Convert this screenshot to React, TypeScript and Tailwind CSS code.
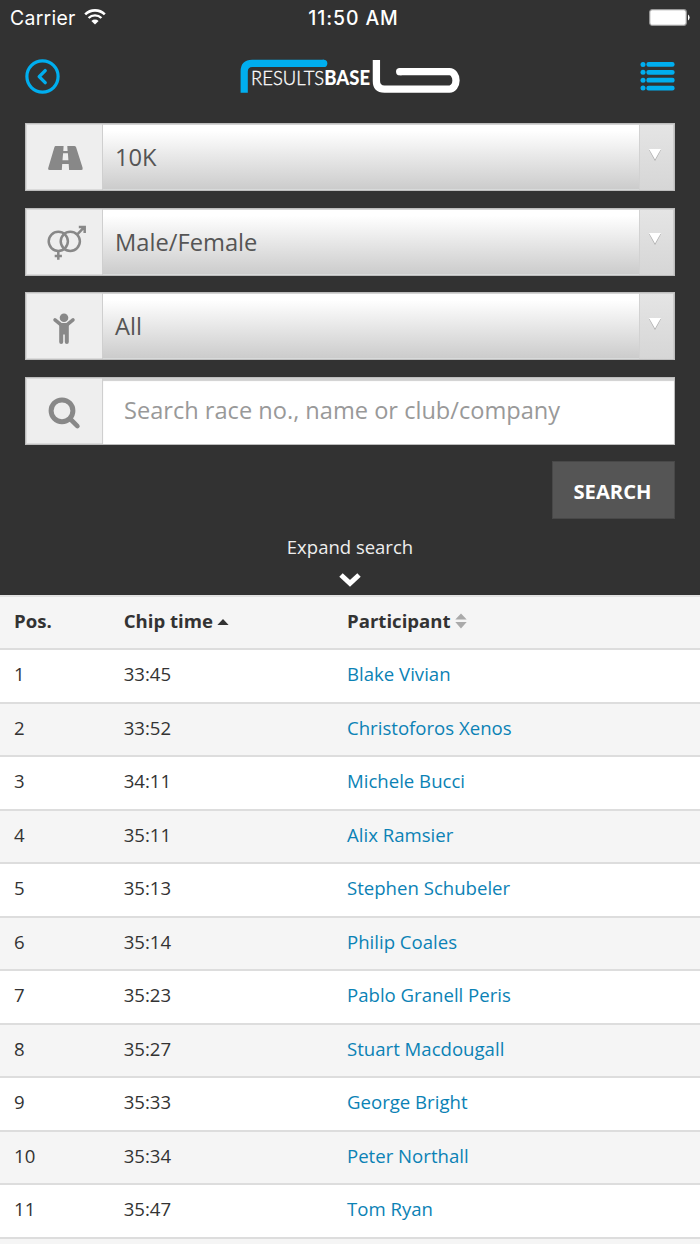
import type { ReactNode } from "react";

const results: [number, string, string][] = [
  [1, "33:45", "Blake Vivian"],
  [2, "33:52", "Christoforos Xenos"],
  [3, "34:11", "Michele Bucci"],
  [4, "35:11", "Alix Ramsier"],
  [5, "35:13", "Stephen Schubeler"],
  [6, "35:14", "Philip Coales"],
  [7, "35:23", "Pablo Granell Peris"],
  [8, "35:27", "Stuart Macdougall"],
  [9, "35:33", "George Bright"],
  [10, "35:34", "Peter Northall"],
  [11, "35:47", "Tom Ryan"],
];

function StatusBar() {
  return (
    <div className="grid h-9 grid-cols-3 items-center pl-[10px] pr-[10px] font-['Inter',sans-serif] text-[19.4px] text-white">
      <div className="flex items-center gap-2 pt-0.5">
        <span className="tracking-[0.3px]">Carrier</span>
        <svg width="22" height="16" viewBox="0 0 22 16" fill="none" stroke="white" className="mb-1">
          <path d="M1.2 5.4a14 14 0 0 1 19.6 0" strokeWidth="2.6" />
          <path d="M4.6 9a9 9 0 0 1 12.8 0" strokeWidth="2.4" />
          <path d="M7.4 11.9a5.2 5.2 0 0 1 7.2 0L11 15.6z" fill="white" stroke="none" />
        </svg>
      </div>
      <span className="pl-[7px] pt-0.5 text-center font-medium tracking-[0.9px] whitespace-nowrap">11:50 AM</span>
      <svg width="42" height="18" viewBox="0 0 42 18" className="justify-self-end">
        <rect x="1.7" y="0.7" width="36.6" height="15.6" rx="2.5" fill="white" stroke="#999" strokeWidth="1.2" />
        <path d="M40 5.6a3.4 3.4 0 0 1 0 5.8z" fill="white" />
      </svg>
    </div>
  );
}

function Logo() {
  return (
    <svg width="220" height="36" viewBox="240 58 220 36" fill="none">
      <path d="M244.2 92.7V71.5q0-8.1 8.1-8.1H324" stroke="#00aeef" strokeWidth="7.2" />
      <path d="M323.5 63.4h.2" stroke="#00aeef" strokeWidth="7.2" strokeLinecap="round" />
      <path d="M376.4 60V81q0 8.1 8.1 8.1H449.5a6.5 8.7 0 0 0 0-17.4H399.6" stroke="white" strokeWidth="7.3" />
      <path d="M399.7 71.7h.2" stroke="white" strokeWidth="7.3" strokeLinecap="round" />
      <text x="251" y="85.2" fontFamily="Lato, sans-serif" fontSize="20.4" fill="white" textLength="119" lengthAdjust="spacingAndGlyphs">
        <tspan fontWeight="300" stroke="white" strokeWidth="0.35">RESULTS</tspan>
        <tspan fontWeight="900">BASE</tspan>
      </text>
    </svg>
  );
}

function Header() {
  return (
    <header className="flex h-20 items-center justify-between px-[25px]">
      <svg width="35" height="35" viewBox="0 0 35 35" fill="none" stroke="#00aeef">
        <circle cx="17.5" cy="17.5" r="15.6" strokeWidth="3.2" />
        <path d="M20.2 11.6l-6 6 6 6" strokeWidth="3.4" strokeLinecap="round" strokeLinejoin="round" />
      </svg>
      <Logo />
      <svg width="35" height="30" viewBox="0 0 35 30" fill="#00aeef">
        {[3.4, 11.3, 19.2, 27.1].map((y) => (
          <g key={y}>
            <circle cx="3" cy={y} r="2.5" />
            <rect x="6.4" y={y - 2.4} width="28.2" height="4.8" rx="2.2" />
          </g>
        ))}
      </svg>
    </header>
  );
}

const roadIcon = (
  <path
    fill="#888"
    d="M29.6 22H37.6L37.3 27H41.6L41.3 22H48.3Q49.5 22 50.1 23.2L56.6 43.8Q57.2 46 55.4 46H43.1L42.7 40H36.2L35.8 46H23.6Q21.6 46 22.3 43.8L28.4 23.2Q28.8 22 29.6 22ZM37.1 29.2L36.5 36.2H42.4L41.9 29.2Z"
  />
);

const venusMarsIcon = (
  <g fill="none" stroke="#888" strokeWidth="2.5">
    <circle cx="32.3" cy="32.3" r="9.6" />
    <circle cx="44.3" cy="32.3" r="9.6" />
    <path d="M32.3 42v8.8M28.7 47h7.2M51.3 25.3l7.2-7.4M52.8 18.1h5.9v5.9" />
  </g>
);

const childIcon = (
  <g fill="#888">
    <circle cx="38" cy="24.7" r="4.3" />
    <path
      d="M29 26.8L34.8 31.7H41.2L47 26.8"
      fill="none"
      stroke="#888"
      strokeWidth="3.5"
      strokeLinecap="round"
      strokeLinejoin="round"
    />
    <path d="M33.2 30.5H42.8V48.9a1.9 1.9 0 0 1-4 0V41.5H37.2V48.9a1.9 1.9 0 0 1-4 0Z" />
  </g>
);

const searchIcon = (
  <g fill="none" stroke="#888">
    <circle cx="36" cy="32.8" r="10.9" strokeWidth="5" />
    <path d="M44.3 41l7.1 7.1" strokeWidth="4.6" strokeLinecap="round" />
  </g>
);

function Field({ icon, children }: { icon: ReactNode; children: ReactNode }) {
  return (
    <div className="flex h-[68px] border border-[#bdbdbd] bg-[#eee]">
      <div className="w-[77px] shrink-0 border-r border-[#cfcfcf] shadow-[inset_1px_1px_0_#dadada,inset_0_-1px_0_#dadada]">
        <svg width="76" height="66" viewBox="0 0 76 66">
          {icon}
        </svg>
      </div>
      {children}
    </div>
  );
}

function SelectField({ icon, value }: { icon: ReactNode; value: string }) {
  return (
    <Field icon={icon}>
      <div className="flex grow bg-linear-to-b from-white from-10% to-[#cbcbcb] text-[#555] shadow-[inset_0_1px_0_#d4d4d4,inset_0_-1px_0_#d8dada]">
        <div className="flex grow items-center pl-3 pt-px text-[23.7px]">{value}</div>
        <div className="flex w-[35px] justify-center border-l border-[#d2d2d2] bg-linear-to-b from-[#e5e5e5] to-[#d6d6d6] pr-1 pt-[23.5px] shadow-[inset_-1px_0_0_#ccc,inset_0_1px_0_#d0d0d0]">
          <svg width="14" height="14" viewBox="0 0 14 14">
            <path d="M1 2H13L7 13Z" fill="#aaa" />
            <path d="M1 1H13L7 11.6Z" fill="white" />
          </svg>
        </div>
      </div>
    </Field>
  );
}

function SearchPanel() {
  return (
    <section className="flex flex-col px-[25px] pt-[7.4px]">
      <div className="flex flex-col gap-[16.45px]">
        <SelectField icon={roadIcon} value="10K" />
        <SelectField icon={venusMarsIcon} value="Male/Female" />
        <SelectField icon={childIcon} value="All" />
        <Field icon={searchIcon}>
          <input
            className="min-w-0 grow bg-white pl-[21px] text-[23.6px] text-[#555] shadow-[inset_0_3px_1px_#d0d0d0] outline-none placeholder:text-[#999]"
            placeholder="Search race no., name or club/company"
          />
        </Field>
      </div>
      <button className="mt-[16.5px] h-[58px] w-[123px] self-end border border-[#484848] bg-[#555] pt-0.5 pr-0.5 text-[20.2px] font-bold text-white">
        SEARCH
      </button>
      <div className="mt-[14px] flex flex-col items-center text-[18.5px] leading-7 text-[#eee]">
        Expand search
        <svg width="24" height="16" viewBox="0 0 24 16" fill="none" stroke="white" className="mt-[10.5px]">
          <path d="M3 3L12 11.4L21 3" strokeWidth="5" />
        </svg>
      </div>
    </section>
  );
}

function ResultsTable() {
  return (
    <section className="shrink-0 text-[18.6px] text-[#333]">
      <div className="grid h-[55.5px] grid-cols-[109.7px_223.3px_1fr] items-center border-y-2 border-t-[#e2e2e2] border-b-[#ddd] bg-[#f5f5f5] pb-[3px] pl-[14px] font-bold">
        <span>Pos.</span>
        <span className="flex items-center gap-1">
          Chip time
          <svg width="12" height="6" viewBox="0 0 12 6" className="mt-0.5">
            <path d="M0.4 6L6 0L11.6 6Z" fill="#333" />
          </svg>
        </span>
        <span className="flex items-center gap-1">
          Participant
          <svg width="12" height="16" viewBox="0 0 12 16" fill="#aaa">
            <path d="M0.3 6.6L6 0.5L11.7 6.6ZM0.3 9L6 15.4L11.7 9Z" />
          </svg>
        </span>
      </div>
      {results.map(([position, time, name]) => (
        <div
          key={position}
          className="grid h-[53.5px] grid-cols-[109.7px_223.3px_1fr] items-center border-b-2 border-[#ddd] pb-[3.5px] pl-[14px] even:bg-white odd:bg-[#f5f5f5]"
        >
          <span>{position}</span>
          <span>{time}</span>
          <span className="text-[#0b82b5]">{name}</span>
        </div>
      ))}
      <div className="h-[53.5px] bg-[#f5f5f5]" />
    </section>
  );
}

export default function App() {
  return (
    <main className="flex h-[1244px] w-[700px] flex-col overflow-hidden bg-white font-['Open_Sans',sans-serif]">
      <div className="h-[594.8px] shrink-0 bg-[#323232]">
        <StatusBar />
        <Header />
        <SearchPanel />
      </div>
      <ResultsTable />
    </main>
  );
}
